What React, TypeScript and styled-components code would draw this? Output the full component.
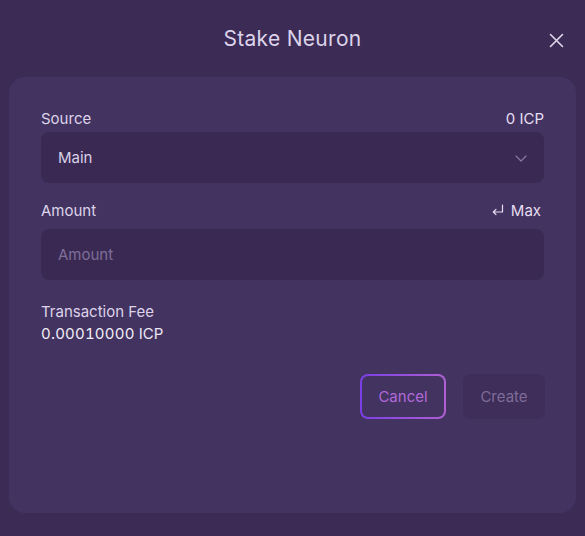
import React from 'react';
import styled, { createGlobalStyle } from 'styled-components';

const GlobalStyle = createGlobalStyle`
  html, body {
    margin: 0;
    padding: 0;
    background: #3c2b55;
  }
  body {
    font-family: Inter, "Noto Sans", sans-serif;
    color: #e3dbef;
  }
`;

const Modal = styled.div`
  width: 585px;
  height: 536px;
  box-sizing: border-box;
  padding: 0 9px;
  display: flex;
  flex-direction: column;
`;

const Header = styled.header`
  height: 77px;
  display: flex;
  align-items: center;
  justify-content: center;
  position: relative;
`;

const Title = styled.h1`
  margin: 0;
  font-size: 21px;
  font-weight: 400;
  color: #dcd3ea;
  letter-spacing: 0.3px;
`;

const CloseButton = styled.button`
  position: absolute;
  right: 11px;
  top: 31px;
  width: 18px;
  height: 18px;
  padding: 0;
  border: none;
  background: none;
  color: #e0d8ec;
  display: flex;
  align-items: center;
  justify-content: center;
  cursor: pointer;
`;

const Card = styled.section`
  height: 436px;
  box-sizing: border-box;
  background: #433360;
  border-radius: 16px;
  padding: 32px 32px 0;
  display: flex;
  flex-direction: column;
`;

const Field = styled.div`
  display: flex;
  flex-direction: column;
  margin-bottom: 18px;
`;

const LabelRow = styled.div<{ $gap?: number }>`
  display: flex;
  justify-content: space-between;
  align-items: center;
  height: 18px;
  margin-bottom: ${({ $gap }) => $gap ?? 5}px;
  font-size: 15px;
  color: #ddd4ea;
`;

const Aside = styled.span<{ $pad?: number }>`
  padding-right: ${({ $pad }) => $pad ?? 0}px;
  color: #e6def1;
  display: flex;
  align-items: center;
  gap: 6px;
`;

const Box = styled.div`
  height: 51px;
  box-sizing: border-box;
  background: #3a2a53;
  border-radius: 8px;
  padding: 0 16px 0 17px;
  display: flex;
  align-items: center;
  justify-content: space-between;
  font-size: 15px;
`;

const Value = styled.span`
  color: #d9d0e7;
`;

const Placeholder = styled.span`
  color: #7f6e98;
`;

const FeeBlock = styled.div`
  margin-top: 4px;
  display: flex;
  flex-direction: column;
  gap: 3px;
  font-size: 15px;
  color: #ddd4ea;
`;

const FeeValue = styled.div`
  color: #ece6f4;
`;

const Number = styled.span`
  font-variant-numeric: tabular-nums;
  letter-spacing: 0.2px;
  color: #f2eef8;
`;

const Actions = styled.div`
  margin-top: 31px;
  display: flex;
  justify-content: flex-end;
  gap: 17px;
  margin-right: -1px;
`;

const Button = styled.button<{ $variant: 'outline' | 'muted' }>`
  height: 45px;
  box-sizing: border-box;
  padding: 0 16px;
  border-radius: 8px;
  font-family: inherit;
  font-size: 15px;
  cursor: pointer;
  ${({ $variant }) =>
    $variant === 'outline'
      ? `
    width: 86px;
    border: 2px solid transparent;
    background:
      linear-gradient(#433360, #433360) padding-box,
      linear-gradient(90deg, #7b3fe4, #b060d4) border-box;
    color: #b169d9;
  `
      : `
    width: 82px;
    border: none;
    background: #3e2e59;
    color: #7e6c99;
  `}
`;

const Chevron = () => (
  <svg width="14" height="14" viewBox="0 0 14 14" fill="none">
    <path d="M2 5l5 5 5-5" stroke="#8a78a3" strokeWidth="1.2" strokeLinecap="round" strokeLinejoin="round" />
  </svg>
);

const ReturnIcon = () => (
  <svg width="14" height="14" viewBox="0 0 14 14" fill="none">
    <path d="M11.5 2v7h-9M5 6.3L2.3 9 5 11.7" stroke="#e6def1" strokeWidth="1.2" strokeLinecap="round" strokeLinejoin="round" />
  </svg>
);

const CloseIcon = () => (
  <svg width="15" height="15" viewBox="0 0 15 15" fill="none">
    <path d="M1.5 1.5l12 12M13.5 1.5l-12 12" stroke="#e0d8ec" strokeWidth="1.6" strokeLinecap="round" />
  </svg>
);

const App: React.FC = () => (
  <>
    <GlobalStyle />
    <Modal>
      <Header>
        <Title>Stake Neuron</Title>
        <CloseButton aria-label="Close">
          <CloseIcon />
        </CloseButton>
      </Header>
      <Card>
        <Field>
          <LabelRow>
            <span>Source</span>
            <Aside>0 ICP</Aside>
          </LabelRow>
          <Box>
            <Value>Main</Value>
            <Chevron />
          </Box>
        </Field>
        <Field>
          <LabelRow $gap={10}>
            <span>Amount</span>
            <Aside $pad={3}>
              <ReturnIcon />
              Max
            </Aside>
          </LabelRow>
          <Box>
            <Placeholder>Amount</Placeholder>
          </Box>
        </Field>
        <FeeBlock>
          <span>Transaction Fee</span>
          <FeeValue>
            <Number>0.00010000</Number> ICP
          </FeeValue>
        </FeeBlock>
        <Actions>
          <Button $variant="outline">Cancel</Button>
          <Button $variant="muted">Create</Button>
        </Actions>
      </Card>
    </Modal>
  </>
);

export default App;
